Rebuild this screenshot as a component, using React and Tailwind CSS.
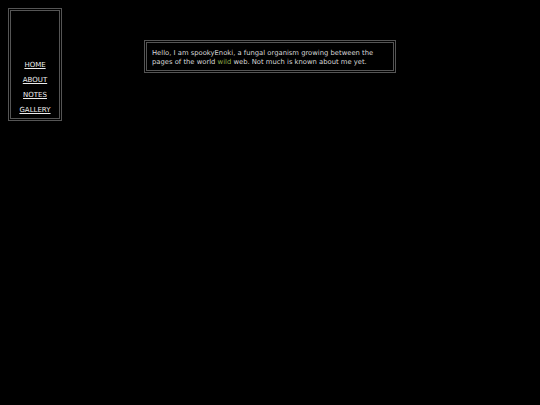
export default function App() {
    return (
        <div className="min-h-[405px] w-full bg-black text-[#dddddd] grid grid-cols-[1fr_252px_1fr] [font-family:'DejaVu_Sans',Verdana,sans-serif]">
            {/* Sidebar nav */}
            <div className="pl-2 pt-2">
                <nav className="w-[54px] h-[113px] border-[3px] border-double border-[#555555] flex flex-col items-center justify-end pb-[3px] gap-[6px]">
                    {['HOME', 'ABOUT', 'NOTES', 'GALLERY'].map(l => (
                        <a key={l} href="#" className="text-[#eeeeee] text-[7px] leading-[9px] underline">{l}</a>
                    ))}
                </nav>
            </div>

            {/* Intro box */}
            <div className="pt-10">
                <div className="border-[3px] border-double border-[#555555] px-[5px] pt-[6px] pb-[3px]">
                    <p className="text-[6.8px] leading-[9px] text-[#d8d8d8]">
                        Hello, I am spookyEnoki, a fungal organism growing between the pages of the world <span className="text-[#8fae4a]">wild</span> web. Not much is known about me yet.
                    </p>
                </div>
            </div>
            <div />
        </div>
    );
}
